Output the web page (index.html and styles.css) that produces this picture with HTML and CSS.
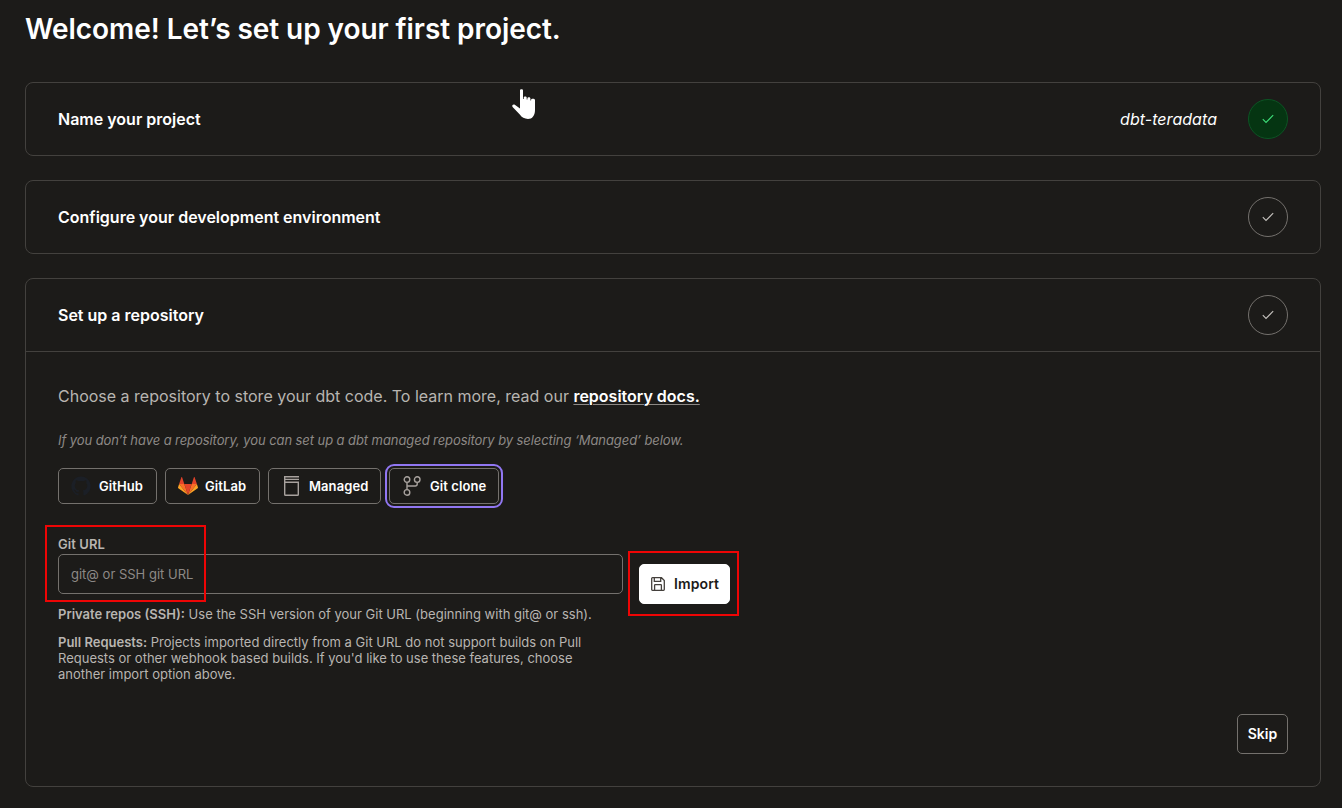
FILE: index.html
```html
<!DOCTYPE html>
<html lang="en">
<head>
  <meta charset="UTF-8">
  <meta name="viewport" content="width=device-width, initial-scale=1.0">
  <title>Set up your project</title>
  <link rel="stylesheet" href="styles.css">
</head>
<body>
  <main>
    <h1>Welcome! Let’s set up your first project.</h1>

    <section class="card">
      <div class="card-header">
        <h2>Name your project</h2>
        <span class="project-name">dbt-teradata</span>
        <span class="status done">
          <svg width="12" height="10" viewBox="0 0 12 10"><path d="M.8 5.2 4 8.4 11.2 1.2"/></svg>
        </span>
      </div>
    </section>

    <section class="card">
      <div class="card-header">
        <h2>Configure your development environment</h2>
        <span class="status">
          <svg width="12" height="10" viewBox="0 0 12 10"><path d="M.8 5.2 4 8.4 11.2 1.2"/></svg>
        </span>
      </div>
    </section>

    <section class="card repository">
      <div class="card-header">
        <h2>Set up a repository</h2>
        <span class="status">
          <svg width="12" height="10" viewBox="0 0 12 10"><path d="M.8 5.2 4 8.4 11.2 1.2"/></svg>
        </span>
      </div>

      <div class="card-body">
        <p class="intro">Choose a repository to store your dbt code. To learn more, read our <a href="#">repository docs.</a></p>
        <p class="hint">If you don’t have a repository, you can set up a dbt managed repository by selecting ‘Managed’ below.</p>

        <div class="providers">
          <button class="provider github">
            <svg width="22" height="22" viewBox="0 0 24 24"><path fill="#1b1f26" d="M12 1.5a10.7 10.7 0 0 0-3.4 20.8c.6.1.8-.2.8-.5v-2c-3 .6-3.7-1.3-3.7-1.3-.5-1.2-1.2-1.6-1.2-1.6-1-.7.1-.7.1-.7 1.1.1 1.7 1.1 1.7 1.1 1 1.7 2.5 1.2 3.2.9.1-.7.4-1.2.7-1.4-2.4-.3-4.9-1.2-4.9-5.3 0-1.2.4-2.1 1.1-2.9-.1-.3-.5-1.4.1-2.9 0 0 .9-.3 2.9 1.1a10 10 0 0 1 5.3 0c2-1.4 2.9-1.1 2.9-1.1.6 1.5.2 2.6.1 2.9.7.8 1.1 1.7 1.1 2.9 0 4.1-2.5 5-4.9 5.3.4.3.7 1 .7 2v3c0 .3.2.6.8.5A10.7 10.7 0 0 0 12 1.5z"/></svg>
            GitHub
          </button>
          <button class="provider gitlab">
            <svg width="20" height="18" viewBox="0 0 20 18">
              <path fill="#e24329" d="M10 18 13.7 7H6.3z"/>
              <path fill="#fc6d26" d="M10 18 6.3 7H1.1zM10 18 13.7 7h5.2z"/>
              <path fill="#fca326" d="M1.1 7 0 10.4c-.1.3 0 .6.3.8L10 18zM18.9 7 20 10.4c.1.3 0 .6-.3.8L10 18z"/>
              <path fill="#e24329" d="M1.1 7h5.2L4.1.3c-.1-.4-.6-.4-.7 0zM18.9 7h-5.2L15.9.3c.1-.4.6-.4.7 0z"/>
            </svg>
            GitLab
          </button>
          <button class="provider managed">
            <svg width="16" height="20" viewBox="0 0 16 20"><path d="M0 .7h15M.7.7v17.8q0 .8.8.8h12q.8 0 .8-.8V6.2H.7M.7 3.4H15"/></svg>
            Managed
          </button>
          <button class="provider clone selected">
            <svg width="18" height="20" viewBox="0 0 18 20"><circle cx="4" cy="3.6" r="2.8"/><circle cx="14.2" cy="3.6" r="2.8"/><circle cx="4" cy="16.4" r="2.8"/><path d="M4 6.4v7.2M14.2 6.4v1.6q0 2-2 2H4"/></svg>
            Git clone
          </button>
        </div>

        <form class="import-form">
          <div class="field">
            <label for="gitUrl">Git URL</label>
            <input type="text" id="gitUrl" placeholder="git@ or SSH git URL">
            <div class="highlight"></div>
          </div>
          <div class="import-wrap">
            <button type="button" class="import">
              <svg width="14" height="14" viewBox="0 0 14 14"><path d="M1.5.7h9l2.8 2.8v9q0 .8-.8.8h-11q-.8 0-.8-.8v-11q0-.8.8-.8zM3.3.7v3.6h6.4V.7M3.6 13.3V8.2q0-.6.6-.6h5.6q.6 0 .6.6v5.1"/></svg>
              Import
            </button>
            <div class="highlight"></div>
          </div>
        </form>

        <div class="notes">
          <p><b>Private repos (SSH):</b> Use the SSH version of your Git URL (beginning with git@ or ssh).</p>
          <p><b>Pull Requests:</b> Projects imported directly from a Git URL do not support builds on Pull Requests or other webhook based builds. If you'd like to use these features, choose another import option above.</p>
        </div>

        <div class="actions">
          <button class="skip">Skip</button>
        </div>
      </div>
    </section>
  </main>

  <svg class="cursor" width="26" height="32" viewBox="0 0 26 32"><path d="M9 1.4C9 0 12 0 12 1.4V10h.7V8.6c0-1.5 3-1.5 3 0v1.9h.7V9.4c0-1.5 3-1.5 3 0v2h.7v-.7c0-1.5 3.9-1.4 3.9.4V21c0 5.6-2.8 9-7 9-3.6 0-6.200-1.500-8.200-4.400L1.600 18c-1.100-1.600.5-2.900 2.200-2.200L9 19.400z"/></svg>
</body>
</html>
```

FILE: styles.css
```css
* {
  box-sizing: border-box;
}

body {
  font-family: Inter, "Liberation Sans", Arial, sans-serif;
  margin: 0;
  background-color: #1c1b19;
  color: #fff;
  overflow: hidden;
}

main {
  padding: 10px 21px 0 25px;
}

h1 {
  margin: 0 0 34px;
  font-size: 28px;
  line-height: 38px;
  font-weight: 600;
  letter-spacing: -0.06px;
}

.card {
  border: 1px solid #43413e;
  border-radius: 8px;
  margin-bottom: 24px;
}

.card-header {
  display: flex;
  align-items: center;
  height: 72px;
  padding: 0 32px;
}

h2 {
  margin: 0 auto 0 0;
  font-size: 16px;
  line-height: 24px;
  font-weight: 600;
}

.project-name {
  font-size: 16px;
  font-style: italic;
  letter-spacing: 0.05px;
  margin-right: 31px;
}

.status {
  display: flex;
  align-items: center;
  justify-content: center;
  width: 40px;
  height: 40px;
  border: 1px solid #74716d;
  border-radius: 50%;
}

.status svg {
  fill: none;
  stroke: #c4c1bd;
  stroke-width: 1.1;
}

.status.done {
  background-color: #053512;
  border-color: #0c5424;
}

.status.done svg {
  stroke: #3ddc78;
}

.repository {
  height: 509px;
}

.repository .card-header {
  height: 73px;
  padding-bottom: 1px;
  border-bottom: 1px solid #43413e;
}

.card-body {
  padding: 32px 32px 0;
}

.intro {
  margin: 0;
  font-size: 16px;
  line-height: 24px;
  color: #b8b5b1;
}

.intro a {
  color: #fff;
  font-weight: 600;
  text-decoration: underline;
  text-decoration-color: #8d8986;
  text-underline-offset: 2px;
  text-decoration-thickness: 1px;
}

.hint {
  margin: 22px 0 18px;
  font-size: 13px;
  line-height: 20px;
  font-style: italic;
  letter-spacing: -0.08px;
  color: #8d8986;
}

button {
  display: flex;
  align-items: center;
  padding: 0;
  border: 1px solid #74716d;
  border-radius: 5px;
  background: transparent;
  color: #fff;
  font-family: inherit;
  font-size: 13px;
  font-weight: 600;
  cursor: pointer;
}

.providers {
  display: flex;
  gap: 8px;
}

.provider {
  height: 36px;
  padding-left: 12px;
  letter-spacing: 0.08px;
}

.provider svg {
  flex: none;
}

.github {
  width: 99px;
  padding-left: 11px;
  gap: 7px;
}

.gitlab {
  width: 95px;
  gap: 7px;
}

.managed {
  width: 113px;
  padding-left: 15px;
  gap: 9px;
}

.clone {
  width: 110px;
  padding-left: 13px;
  gap: 9px;
}

.managed svg,
.clone svg {
  fill: none;
  stroke: #a8a29e;
  stroke-width: 1.4;
}

.selected {
  outline: 2px solid #9177f2;
  outline-offset: 2px;
}

.import-form {
  display: flex;
  align-items: flex-end;
  gap: 16px;
  margin-top: 32px;
}

.field {
  position: relative;
  width: 565px;
}

label {
  display: block;
  padding-bottom: 2px;
  font-size: 13px;
  line-height: 16px;
  font-weight: 600;
  letter-spacing: 0.08px;
  color: #b8b5b1;
}

input {
  display: block;
  width: 100%;
  height: 40px;
  padding: 0 12px;
  border: 1px solid #74716d;
  border-radius: 5px;
  background: transparent;
  color: #fff;
  font-family: inherit;
  font-size: 13px;
}

input::placeholder {
  color: #8d8986;
}

.highlight {
  position: absolute;
  border: 2px solid #ee0505;
  pointer-events: none;
}

.field .highlight {
  left: -13px;
  top: -11px;
  width: 161px;
  height: 77px;
}

.import-wrap {
  position: relative;
  margin-bottom: -10px;
}

.import-wrap .highlight {
  inset: -13px -9px -12px -11px;
}

.import {
  width: 91px;
  height: 40px;
  padding: 0 0 1px 11px;
  gap: 9px;
  border-color: #fff;
  background: #fff;
  color: #1c1b19;
  font-size: 14px;
  letter-spacing: 0.1px;
}

.import svg {
  fill: none;
  stroke: #44403c;
  stroke-width: 1.3;
}

.notes {
  width: 565px;
  margin-top: 12px;
  font-size: 13px;
  line-height: 16px;
  color: #b8b5b1;
}

.notes p {
  margin: 0 0 12px;
}

.notes b {
  font-weight: 600;
}

.actions {
  display: flex;
  justify-content: flex-end;
  margin-top: 32px;
}

.skip {
  justify-content: center;
  width: 51px;
  height: 40px;
  padding-bottom: 2px;
  font-size: 14px;
}

.cursor {
  position: absolute;
  left: 511px;
  top: 89px;
  fill: #fff;
}
```
